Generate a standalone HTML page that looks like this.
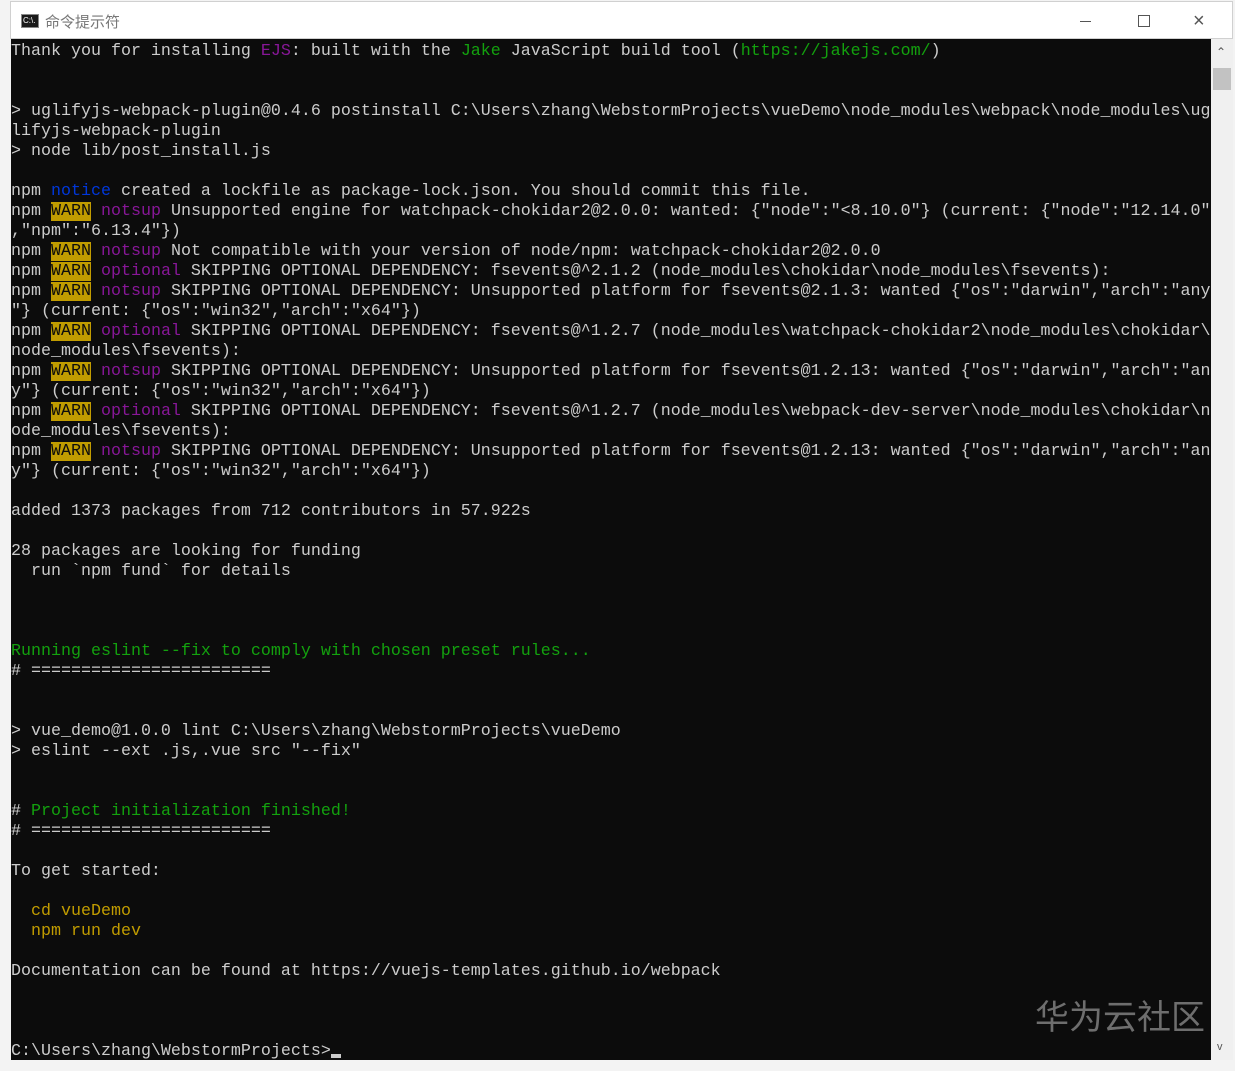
<!DOCTYPE html>
<html><head><meta charset="utf-8"><style>
html,body{margin:0;padding:0;width:1235px;height:1071px;overflow:hidden;background:#f3f3f3;position:relative}
#title{position:absolute;left:10px;top:1px;width:1223px;height:38px;background:#fff;border:1px solid #d0d0d0;box-sizing:border-box}
#con{position:absolute;left:11px;top:39px;width:1200px;height:1021px;background:#0c0c0c;overflow:hidden}
#sb{position:absolute;left:1211px;top:39px;width:22px;height:1021px;background:#f0f0f0}
pre{margin:0;position:absolute;left:0;top:3px;font-family:"Liberation Mono","Noto Sans CJK SC",monospace;font-size:16.67px;line-height:20px;color:#cccccc;white-space:pre}
.p{color:#881798}.g{color:#13a10e}.b{color:#0037da}.y{color:#c19c00}
.w{background:#c19c00;color:#0c0c0c}
</style></head><body>
<div id="title">
<div style="position:absolute;left:10px;top:12px;width:18px;height:14px;background:#1a1a1a;border:1px solid #888;box-sizing:border-box;color:#fff;font:8px 'Liberation Sans';line-height:12px;padding-left:1px">C:\.</div>
<div style="position:absolute;left:34px;top:9px;font:15px 'Liberation Sans','Noto Sans CJK SC',sans-serif;color:#777">命令提示符</div>
<div style="position:absolute;left:1069px;top:19px;width:11px;height:1px;background:#555"></div>
<div style="position:absolute;left:1127px;top:13px;width:10px;height:10px;border:1px solid #555"></div>
<div style="position:absolute;left:1182px;top:8px;font:20px 'Liberation Sans',sans-serif;color:#555">×</div>
</div>
<div id="con"><pre>Thank you for installing <span class="p">EJS</span>: built with the <span class="g">Jake</span> JavaScript build tool (<span class="g">https://jakejs.com/</span>)


> uglifyjs-webpack-plugin@0.4.6 postinstall C:\Users\zhang\WebstormProjects\vueDemo\node_modules\webpack\node_modules\ug
lifyjs-webpack-plugin
> node lib/post_install.js

npm <span class="b">notice</span> created a lockfile as package-lock.json. You should commit this file.
npm <span class="w">WARN</span> <span class="p">notsup</span> Unsupported engine for watchpack-chokidar2@2.0.0: wanted: {"node":"&lt;8.10.0"} (current: {"node":"12.14.0"
,"npm":"6.13.4"})
npm <span class="w">WARN</span> <span class="p">notsup</span> Not compatible with your version of node/npm: watchpack-chokidar2@2.0.0
npm <span class="w">WARN</span> <span class="p">optional</span> SKIPPING OPTIONAL DEPENDENCY: fsevents@^2.1.2 (node_modules\chokidar\node_modules\fsevents):
npm <span class="w">WARN</span> <span class="p">notsup</span> SKIPPING OPTIONAL DEPENDENCY: Unsupported platform for fsevents@2.1.3: wanted {"os":"darwin","arch":"any
"} (current: {"os":"win32","arch":"x64"})
npm <span class="w">WARN</span> <span class="p">optional</span> SKIPPING OPTIONAL DEPENDENCY: fsevents@^1.2.7 (node_modules\watchpack-chokidar2\node_modules\chokidar\
node_modules\fsevents):
npm <span class="w">WARN</span> <span class="p">notsup</span> SKIPPING OPTIONAL DEPENDENCY: Unsupported platform for fsevents@1.2.13: wanted {"os":"darwin","arch":"an
y"} (current: {"os":"win32","arch":"x64"})
npm <span class="w">WARN</span> <span class="p">optional</span> SKIPPING OPTIONAL DEPENDENCY: fsevents@^1.2.7 (node_modules\webpack-dev-server\node_modules\chokidar\n
ode_modules\fsevents):
npm <span class="w">WARN</span> <span class="p">notsup</span> SKIPPING OPTIONAL DEPENDENCY: Unsupported platform for fsevents@1.2.13: wanted {"os":"darwin","arch":"an
y"} (current: {"os":"win32","arch":"x64"})

added 1373 packages from 712 contributors in 57.922s

28 packages are looking for funding
  run `npm fund` for details



<span class="g">Running eslint --fix to comply with chosen preset rules...</span>
# ========================


> vue_demo@1.0.0 lint C:\Users\zhang\WebstormProjects\vueDemo
> eslint --ext .js,.vue src "--fix"


# <span class="g">Project initialization finished!</span>
# ========================

To get started:

  <span class="y">cd vueDemo</span>
  <span class="y">npm run dev</span>

Documentation can be found at https://vuejs-templates.github.io/webpack



C:\Users\zhang\WebstormProjects><span style="display:inline-block;width:10px;height:4px;background:#ccc;vertical-align:-3px"></span></pre>
<div style="position:absolute;left:1024px;top:956px;font:34px 'Noto Sans CJK SC',sans-serif;color:#6e6e6e;line-height:40px">华为云社区</div>
</div>
<div id="sb">
<div style="position:absolute;left:5px;top:6px;font:12px 'Liberation Sans',sans-serif;color:#555">&#8963;</div>
<div style="position:absolute;left:2px;top:29px;width:18px;height:22px;background:#c2c2c2"></div>
<div style="position:absolute;left:6px;top:1002px;font:11px 'Liberation Sans',sans-serif;color:#555">v</div>
</div>
</body></html>
